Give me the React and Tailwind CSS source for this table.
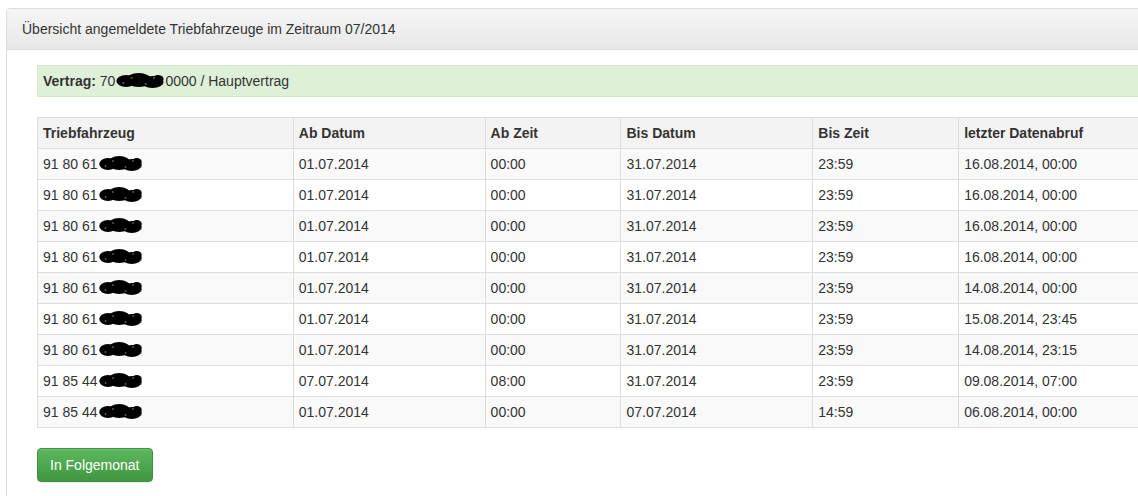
import React from "react";

const rows = [
  ["91 80 61", "01.07.2014", "00:00", "31.07.2014", "23:59", "16.08.2014, 00:00"],
  ["91 80 61", "01.07.2014", "00:00", "31.07.2014", "23:59", "16.08.2014, 00:00"],
  ["91 80 61", "01.07.2014", "00:00", "31.07.2014", "23:59", "16.08.2014, 00:00"],
  ["91 80 61", "01.07.2014", "00:00", "31.07.2014", "23:59", "16.08.2014, 00:00"],
  ["91 80 61", "01.07.2014", "00:00", "31.07.2014", "23:59", "14.08.2014, 00:00"],
  ["91 80 61", "01.07.2014", "00:00", "31.07.2014", "23:59", "15.08.2014, 23:45"],
  ["91 80 61", "01.07.2014", "00:00", "31.07.2014", "23:59", "14.08.2014, 23:15"],
  ["91 85 44", "07.07.2014", "08:00", "31.07.2014", "23:59", "09.08.2014, 07:00"],
  ["91 85 44", "01.07.2014", "00:00", "07.07.2014", "14:59", "06.08.2014, 00:00"],
];

const headers = ["Triebfahrzeug", "Ab Datum", "Ab Zeit", "Bis Datum", "Bis Zeit", "letzter Datenabruf"];
const widths = ["w-[256px]", "w-[192px]", "w-[136px]", "w-[192px]", "w-[146px]", "w-[200px]"];

// scribbled-out redaction
function Blot({ w = 36 }) {
  return (
    <svg width={w} height="18" viewBox="0 0 36 18" preserveAspectRatio="none" className="inline-block align-[-4px]">
      <ellipse cx="8" cy="9" rx="7" ry="6" fill="#000" />
      <ellipse cx="17" cy="8" rx="9" ry="7" fill="#000" />
      <ellipse cx="27" cy="10" rx="8" ry="6" fill="#000" />
      <ellipse cx="31" cy="7" rx="4" ry="4" fill="#000" />
      <circle cx="12" cy="6" r="0.8" fill="#777" />
      <circle cx="22" cy="12" r="0.8" fill="#777" />
      <circle cx="28" cy="6" r="0.7" fill="#888" />
      <circle cx="6" cy="11" r="0.7" fill="#888" />
      <circle cx="34" cy="12" r="0.8" fill="#333" />
    </svg>
  );
}

export default function App() {
  return (
    <div className="w-[1138px] h-[496px] overflow-hidden bg-white text-[14px] leading-[20px] text-[#333]" style={{ fontFamily: '"Liberation Sans", Arial, sans-serif' }}>
      <div className="ml-[6px] mt-[8px] w-[1170px] border border-[#ddd] rounded-[4px] bg-white">
        <div className="px-[15px] py-[10px] border-b border-[#ddd] rounded-t-[4px] bg-gradient-to-b from-[#f5f5f5] to-[#e8e8e8]">
          Übersicht angemeldete Triebfahrzeuge im Zeitraum 07/2014
        </div>
        <div className="p-[15px]">
          <div className="px-[15px]">
            <div className="mb-[20px] border border-[#d6e9c6] bg-[#dff0d8] px-[5px] py-[5px]">
              <b>Vertrag:</b> 70<Blot w={50} />0000 / Hauptvertrag
            </div>
            <table className="w-[1122px] border-collapse border border-[#ddd] mb-[20px]">
              <thead>
                <tr className="bg-[#f3f3f3]">
                  {headers.map((h, i) => (
                    <th key={h} className={`${widths[i]} border border-[#ddd] px-[5px] py-[5px] text-left font-bold`}>
                      {h}
                    </th>
                  ))}
                </tr>
              </thead>
              <tbody>
                {rows.map((r, i) => (
                  <tr key={i} className={i % 2 === 0 ? "bg-[#f9f9f9]" : "bg-white"}>
                    {r.map((c, j) => (
                      <td key={j} className="border border-[#ddd] px-[5px] py-[5px]">
                        {c}
                        {j === 0 ? <Blot w={45} /> : null}
                      </td>
                    ))}
                  </tr>
                ))}
              </tbody>
            </table>
            <button className="rounded-[4px] border border-[#3e8f3e] bg-gradient-to-b from-[#5cb85c] to-[#419641] px-[12px] py-[6px] text-white shadow-[inset_0_1px_0_rgba(255,255,255,0.15),0_1px_1px_rgba(0,0,0,0.075)]">
              In Folgemonat
            </button>
          </div>
        </div>
      </div>
    </div>
  );
}
